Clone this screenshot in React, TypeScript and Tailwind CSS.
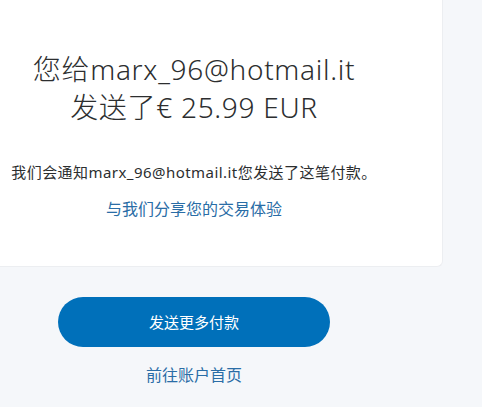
import React from "react";

export default function App() {
  const font = { fontFamily: '"Noto Sans", "Noto Sans CJK SC", sans-serif' };
  return (
    <div className="w-[482px] h-[407px] bg-[#f5f7fa] overflow-hidden" style={font}>
      <div className="w-[443px] h-[267px] bg-white rounded-br-[6px] border-r border-b border-[#eceef1]">
        <div className="w-[388px] flex flex-col items-center pt-[50px]">
          <h1 className="text-[28px] leading-[38px] text-[#2c2e2f] text-center font-light tracking-[0.7px]">
            您给marx_96@hotmail.it
            <br />
            发送了€ 25.99 EUR
          </h1>
          <p className="mt-[36px] text-[15px] leading-[20px] text-[#2c2e2f] whitespace-nowrap tracking-[0.45px]">
            我们会通知marx_96@hotmail.it您发送了这笔付款。
          </p>
          <a className="mt-[17px] text-[16px] leading-[20px] text-[#2a6da6]">与我们分享您的交易体验</a>
        </div>
      </div>
      <div className="w-[388px] flex flex-col items-center pt-[30px]">
        <button className="w-[272px] h-[50px] rounded-full bg-[#0070ba] text-white text-[15px]">
          发送更多付款
        </button>
        <a className="mt-[18px] text-[16px] leading-[20px] text-[#2a6da6]">前往账户首页</a>
      </div>
    </div>
  );
}
